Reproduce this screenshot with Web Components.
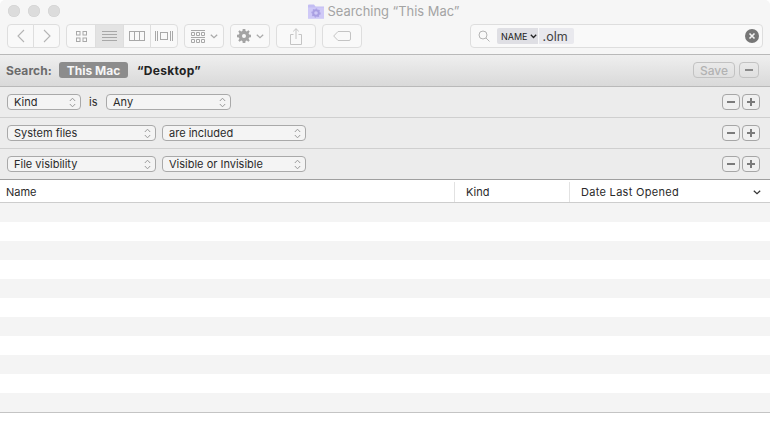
<!DOCTYPE html>
<html><head><meta charset="utf-8"><title>Searching "This Mac"</title>
<style>
html,body{margin:0;padding:0;background:#fff}
body{width:770px;height:436px;overflow:hidden;font-family:Inter,"Liberation Sans",sans-serif;font-size:11px;color:#222}
finder-window{width:770px}
</style></head><body>
<finder-window>
  <title-bar>Searching “This Mac”</title-bar>
  <tool-bar></tool-bar>
  <search-bar></search-bar>
  <rule-row a="Kind" aw="74" is b="Any" bw="125"></rule-row>
  <rule-row a="System files" aw="149" b="are included" bw="144"></rule-row>
  <rule-row a="File visibility" aw="149" b="Visible or Invisible" bw="144" last></rule-row>
  <list-header></list-header>
  <stripe-list rows="11"></stripe-list>
</finder-window>
<script>
function def(name, html){
  customElements.define(name, class extends HTMLElement{
    connectedCallback(){
      if(this.shadowRoot) return;
      const r=this.attachShadow({mode:'open'});
      r.innerHTML = typeof html==='function' ? html(this) : html;
    }
  });
}
def('finder-window',`<style>:host{display:flex;flex-direction:column;border-radius:5px 5px 0 0;overflow:hidden}</style><slot></slot>`);

def('title-bar',`<style>
:host{display:flex;align-items:center;height:22px;background:#f6f6f6}
.l{display:flex;gap:8px;padding-left:8px;flex:none}
.l i{width:12px;height:12px;border-radius:50%;background:#dcdcdc;box-shadow:inset 0 0 0 .5px #d0d0d0}
.t{flex:1;display:flex;justify-content:center;align-items:center;gap:4px;color:#a4a4a4;font-size:12.9px;padding-right:63px}
svg{display:block}
</style>
<div class="l"><i></i><i></i><i></i></div>
<div class="t"><svg width="16" height="15" viewBox="0 0 16 15"><path d="M0 1.500Q0 .5 1 .5H6L7.500 2.500H16V14.500H0Z" fill="#c3bdf2"/><rect x="0" y="3.500" width="16" height="11" fill="#cfc9f7"/><circle cx="8" cy="9" r="2.800" fill="none" stroke="#a99fe2" stroke-width="2"/><circle cx="8" cy="9" r="4" fill="none" stroke="#a99fe2" stroke-width="1.200" stroke-dasharray="1.500 1.500"/></svg><slot></slot></div>`);

const chev=`<svg width="8" height="5" viewBox="0 0 8 5"><path d="M.8.8L4 3.800 7.200.8" fill="none" stroke="#a9a9a9" stroke-width="1.200"/></svg>`;
def('tool-bar',`<style>
:host{display:flex;align-items:flex-start;height:30px;background:#f6f6f6;border-bottom:1px solid #b9b9b9;padding:2px 7px 0}
.b{display:flex;align-items:center;justify-content:center;height:22px;border:1px solid #dedede;border-radius:4px;background:#f9f9f9;flex:none}
.g{display:flex;margin-right:6px}
.g .b{border-radius:0;margin-left:-1px}
.g .b:first-child{border-radius:4px 0 0 4px;margin-left:0}
.g .b:last-child{border-radius:0 4px 4px 0}
.on{background:#e3e3e3!important}
.m{margin-right:6px;gap:5px}
svg{display:block}
.s{margin-left:108px;width:291px;justify-content:flex-start}
.tok{display:flex;align-items:center;height:16px;background:#dfdfe4;color:#222;font-size:9px;padding:0 1px 0 4px;margin-left:7px;border-radius:2px 0 0 2px;gap:2px}
.txt{display:flex;align-items:center;height:16px;background:#e9e9ee;color:#444;font-size:12.5px;padding:0 6px 0 4px;margin-left:1px;border-radius:0 2px 2px 0}
.x{margin-left:auto;margin-right:3px}
</style>
<div class="g">
 <div class="b" style="width:25px"><svg width="10" height="14" viewBox="0 0 10 14"><path d="M8 1L2 7l6 6" fill="none" stroke="#b4b4b4" stroke-width="1.100"/></svg></div>
 <div class="b" style="width:25px"><svg width="10" height="14" viewBox="0 0 10 14"><path d="M2 1l6 6-6 6" fill="none" stroke="#b4b4b4" stroke-width="1.100"/></svg></div>
</div>
<div class="g">
 <div class="b" style="width:28px"><svg width="11" height="11" viewBox="0 0 11 11" fill="none" stroke="#a8a8a8"><rect x=".5" y=".5" width="3.500" height="3.500"/><rect x="7" y=".5" width="3.500" height="3.500"/><rect x=".5" y="7" width="3.500" height="3.500"/><rect x="7" y="7" width="3.500" height="3.500"/></svg></div>
 <div class="b on" style="width:27px"><svg width="15" height="11" viewBox="0 0 15 11" stroke="#a8a8a8"><path d="M0 .5h15M0 3.500h15M0 6.500h15M0 9.500h15"/></svg></div>
 <div class="b" style="width:26px"><svg width="16" height="10" viewBox="0 0 16 10" fill="none" stroke="#a8a8a8"><rect x=".5" y=".5" width="15" height="9"/><path d="M5.500 .5v9M10.500 .5v9"/></svg></div>
 <div class="b" style="width:26px"><svg width="18" height="10" viewBox="0 0 18 10" fill="none" stroke="#a8a8a8"><rect x="5.500" y="1.500" width="7" height="7"/><path d="M.5 0v10M2.500 0v10M15.500 0v10M17.500 0v10"/></svg></div>
</div>
<div class="b m" style="width:38px"><svg width="14" height="13" viewBox="0 0 14 13" fill="none" stroke="#a8a8a8"><path d="M0 .5h14M0 7.500h14"/><path d="M.5 2.500h3v3h-3zM5.500 2.500h3v3h-3zM10.500 2.500h3v3h-3zM.5 9.500h3v3h-3zM5.500 9.500h3v3h-3zM10.500 9.500h3v3h-3z"/></svg>${chev}</div>
<div class="b m" style="width:38px"><svg width="14" height="14" viewBox="0 0 14 14"><path fill="#a4a4a4" fill-rule="evenodd" d="M5.700 0h2.600l.3 1.900 1.200.5L11.400 1.300l1.300 1.300-1.100 1.600.5 1.200 1.900.3v2.600l-1.900.3-.5 1.200 1.100 1.600-1.300 1.300-1.600-1.100-1.200.5-.3 1.900H5.700l-.3-1.900-1.200-.5-1.600 1.100-1.300-1.300 1.100-1.600-.5-1.200L0 8.300V5.700l1.900-.3.5-1.200-1.100-1.600 1.300-1.300 1.600 1.100 1.200-.5zM7 5a2 2 0 100 4 2 2 0 000-4z"/></svg>${chev}</div>
<div class="b m" style="width:38px"><svg width="12" height="17" viewBox="0 0 12 17" fill="none" stroke="#c4c4c4"><path d="M3.500 6.500H.5v10h11v-10H8.500M6 11V.8M3.200 3.400L6 .7l2.800 2.700"/></svg></div>
<div class="b" style="width:38px"><svg width="18" height="10" viewBox="0 0 18 10" fill="none" stroke="#c4c4c4"><path d="M5 .5H16Q17.500 .5 17.500 2V8Q17.500 9.500 16 9.500H5L.7 5z"/></svg></div>
<div class="b s"><svg style="margin-left:7px" width="12" height="12" viewBox="0 0 12 12" fill="none" stroke="#b4b4b4"><circle cx="5" cy="5" r="4"/><path d="M8 8l3.500 3.500"/></svg>
 <span class="tok">NAME<svg width="7" height="5" viewBox="0 0 7 5"><path d="M.8.8L3.500 3.500 6.200.8" fill="none" stroke="#222" stroke-width="1.300"/></svg></span><span class="txt">.olm</span>
 <svg class="x" width="14" height="14" viewBox="0 0 14 14"><circle cx="7" cy="7" r="7" fill="#767676"/><path d="M4.500 4.500l5 5M9.500 4.500l-5 5" stroke="#f4f4f4" stroke-width="1.600"/></svg></div>`);

def('search-bar',`<style>
:host{display:flex;align-items:center;height:30px;background:linear-gradient(#efefef,#d9d9d9);border-bottom:1px solid #b9b9b9;padding:0 11px 1px 6px;font-size:12px;font-weight:700}
.l{color:#6b6b6b;margin-right:7px;width:46px;letter-spacing:.1px}
.p{background:#8c8c8c;color:#f6f6f6;border-radius:3px;height:16px;width:69px;display:flex;align-items:center;justify-content:center;margin-right:9px}
.d{color:#222;flex:1;letter-spacing:.3px}
.s{color:#b2b2b2;font-weight:500;border:1px solid #c2c2c2;border-radius:4px;width:40px;height:14px;display:flex;align-items:center;justify-content:center;margin-right:4px}
.mn{border:1px solid #c2c2c2;border-radius:4px;width:18px;height:14px;display:flex;align-items:center;justify-content:center}
.mn i{width:8px;height:2px;background:#8a8a8a}
</style><span class="l">Search:</span><span class="p">This Mac</span><span class="d">“Desktop”</span><span class="s">Save</span><span class="mn"><i></i></span>`);

const updn=`<svg width="7" height="11" viewBox="0 0 7 11" fill="none" stroke="#9a9a9a"><path d="M.8 4L3.500 1.200 6.200 4M.8 7L3.500 9.800 6.200 7"/></svg>`;
const sel=(t,w)=>`<span class="sel" style="width:${w}px"><span>${t}</span>${updn}</span>`;
def('rule-row',h=>`<style>
:host{display:flex;align-items:center;height:30px;background:#ececec;border-bottom:1px solid ${h.hasAttribute('last')?'#9f9f9f':'#cfcfcf'};padding:0 10px 0 7px;font-size:11px;color:#2a2a2a}
.sel{display:flex;align-items:center;justify-content:space-between;box-sizing:border-box;height:16px;background:#f4f4f4;border:1px solid #a9a9a9;border-radius:4px;padding:0 4px 0 6px;margin-right:6px;flex:none}
.is{margin:0 9px 0 2px;width:8px}
.sp{flex:1}
.b{box-sizing:border-box;width:18px;height:16px;border:1px solid #a6a6a6;border-radius:4px;background:#f0f0f0;position:relative;flex:none}
.b+.b{margin-left:2px}
.h{position:absolute;left:4px;top:6px;width:8px;height:2px;background:#7b7b7b}
.v{position:absolute;left:7px;top:3px;width:2px;height:8px;background:#7b7b7b}
</style>${sel(h.getAttribute('a'),+h.getAttribute('aw'))}${h.hasAttribute('is')?'<span class="is">is</span>':''}${sel(h.getAttribute('b'),+h.getAttribute('bw'))}<span class="sp"></span><span class="b"><i class="h"></i></span><span class="b"><i class="h"></i><i class="v"></i></span>`);

def('list-header',`<style>
:host{display:flex;align-items:stretch;height:22px;background:#fff;border-bottom:1px solid #cdcdcd;font-size:11px;color:#2a2a2a}
.c{display:flex;align-items:center;box-sizing:border-box;margin:2px 0 0}
.c:not(:last-child){border-right:1px solid #e2e2e2}
.n{width:455px;padding-left:6px}.k{width:115px;padding-left:11px}.d{flex:1;padding:0 9px 0 11px;justify-content:space-between}
.d span{letter-spacing:.3px}
</style><div class="c n">Name</div><div class="c k">Kind</div><div class="c d"><span>Date Last Opened</span><svg width="8" height="5" viewBox="0 0 8 5"><path d="M.8.8L4 3.800 7.200.8" fill="none" stroke="#333" stroke-width="1.200"/></svg></div>`);

def('stripe-list',h=>`<style>
:host{display:block;border-bottom:1px solid #c4c4c4}
div{height:19px;background:#fff}
div.o{background:#f4f4f4}
</style>${Array.from({length:+h.getAttribute('rows')},(_,i)=>`<div class="${i%2?'':'o'}"></div>`).join('')}`);
</script>
</body></html>
